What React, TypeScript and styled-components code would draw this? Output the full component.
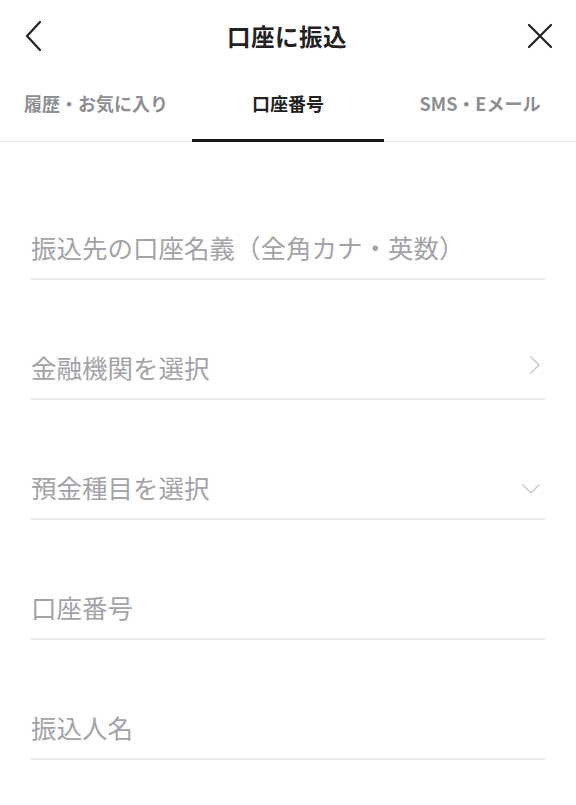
import styled, { createGlobalStyle } from "styled-components";

const GlobalStyle = createGlobalStyle`
  html, body {
    margin: 0;
    padding: 0;
    background: #ffffff;
  }
  body {
    font-family: "Noto Sans CJK JP", "Noto Sans", sans-serif;
  }
`;

type FieldKind = "text" | "link" | "select";

const fields: { label: string; kind: FieldKind }[] = [
  { label: "振込先の口座名義（全角カナ・英数）", kind: "text" },
  { label: "金融機関を選択", kind: "link" },
  { label: "預金種目を選択", kind: "select" },
  { label: "口座番号", kind: "text" },
  { label: "振込人名", kind: "text" },
];

const tabs = ["履歴・お気に入り", "口座番号", "SMS・Eメール"];

const App: React.FC = () => {
  return (
    <Page>
      <GlobalStyle />
      <Header>
        <IconButton aria-label="戻る">
          <svg width="20" height="32" viewBox="0 0 20 32" fill="none">
            <path d="M16 2 L3 16 L16 30" stroke="#222" strokeWidth="2.2" strokeLinecap="round" strokeLinejoin="round" />
          </svg>
        </IconButton>
        <Title>口座に振込</Title>
        <IconButton aria-label="閉じる">
          <svg width="28" height="28" viewBox="0 0 28 28" fill="none">
            <path d="M3 3 L25 25 M25 3 L3 25" stroke="#222" strokeWidth="2.2" strokeLinecap="round" />
          </svg>
        </IconButton>
      </Header>
      <TabBar>
        {tabs.map((t, i) => (
          <Tab key={t} $active={i === 1}>
            {t}
          </Tab>
        ))}
      </TabBar>
      <Form>
        {fields.map((f) => (
          <Field key={f.label}>
            <Placeholder>{f.label}</Placeholder>
            {f.kind === "link" && (
              <svg width="12" height="20" viewBox="0 0 12 20" fill="none">
                <path d="M2 2 L10 10 L2 18" stroke="#c9c9ce" strokeWidth="1.6" strokeLinecap="round" strokeLinejoin="round" />
              </svg>
            )}
            {f.kind === "select" && (
              <svg width="20" height="12" viewBox="0 0 20 12" fill="none">
                <path d="M2 2 L10 10 L18 2" stroke="#c9c9ce" strokeWidth="1.6" strokeLinecap="round" strokeLinejoin="round" />
              </svg>
            )}
          </Field>
        ))}
      </Form>
    </Page>
  );
};

const Page = styled.div`
  width: 576px;
  min-height: 805px;
  background: #fff;
`;

const Header = styled.header`
  height: 72px;
  display: flex;
  align-items: center;
  justify-content: space-between;
  padding: 0 22px 0 20px;
  box-sizing: border-box;
`;

const IconButton = styled.button`
  background: none;
  border: none;
  padding: 0;
  width: 28px;
  height: 32px;
  display: flex;
  align-items: center;
  justify-content: center;
`;

const Title = styled.h1`
  margin: 0;
  font-size: 23.5px;
  font-weight: 700;
  color: #222;
  letter-spacing: 0.5px;
`;

const TabBar = styled.nav`
  display: grid;
  grid-template-columns: repeat(3, 1fr);
  border-bottom: 1px solid #e8e8e8;
`;

const Tab = styled.div<{ $active?: boolean }>`
  height: 70px;
  box-sizing: border-box;
  display: flex;
  align-items: center;
  justify-content: center;
  padding-bottom: 6px;
  font-size: 18px;
  font-weight: 700;
  color: ${(p) => (p.$active ? "#222" : "#8e8e93")};
  border-bottom: 3px solid ${(p) => (p.$active ? "#1a1a1a" : "transparent")};
  margin-bottom: -1px;
`;

const Form = styled.div`
  padding: 18px 31px 0;
`;

const Field = styled.div`
  height: 120px;
  box-sizing: border-box;
  display: flex;
  align-items: flex-end;
  justify-content: space-between;
  padding: 0 4px 13px 0;
  border-bottom: 2px solid #ececec;

  svg {
    margin-bottom: 10px;
  }
`;

const Placeholder = styled.span`
  font-size: 25.5px;
  line-height: 36px;
  color: #a3a3a8;
  font-weight: 400;
`;

export default App;
